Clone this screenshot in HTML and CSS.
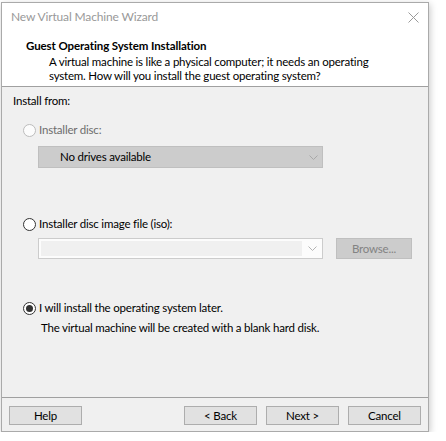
FILE: index.html
```html
<!DOCTYPE html>
<html>
<head>
<meta charset="utf-8">
<link rel="stylesheet" href="styles.css">
</head>
<body>
<div class="window">
  <div class="titlebar">
    <span class="title">New Virtual Machine Wizard</span>
    <svg class="close" width="11" height="11" viewBox="0 0 11 11"><path d="M0.5 0.5 L10.5 10.5 M10.5 0.5 L0.5 10.5" stroke="#9a9a9a" stroke-width="1" fill="none"/></svg>
  </div>
  <div class="header">
    <div class="heading">Guest Operating System Installation</div>
    <div class="desc">
      <span class="line">A virtual machine is like a physical computer; it needs an operating</span>
      <span class="line">system. How will you install the guest operating system?</span>
    </div>
  </div>
  <div class="content">
    <div class="group-label">Install from:</div>

    <div class="radio-row row-disc disabled">
      <span class="radio"></span>
      <span class="radio-label">Installer disc:</span>
    </div>
    <div class="combo combo-disabled">
      <span class="combo-text">No drives available</span>
      <svg class="chev" width="9" height="5" viewBox="0 0 9 5"><polyline points="0.5,0.5 4.5,4.5 8.5,0.5" stroke="#a8a8a8" fill="none"/></svg>
    </div>

    <div class="radio-row row-iso">
      <span class="radio"></span>
      <span class="radio-label">Installer disc image file (iso):</span>
    </div>
    <div class="iso-line">
      <div class="combo combo-edit">
        <span class="field"></span>
        <svg class="chev" width="9" height="5" viewBox="0 0 9 5"><polyline points="0.5,0.5 4.5,4.5 8.5,0.5" stroke="#b4b4b4" fill="none"/></svg>
      </div>
      <div class="btn btn-disabled browse">Browse...</div>
    </div>

    <div class="radio-row row-later">
      <span class="radio checked"></span>
      <span class="radio-label">I will install the operating system later.</span>
    </div>
    <div class="note">The virtual machine will be created with a blank hard disk.</div>
  </div>
  <div class="footer">
    <div class="btn help">Help</div>
    <div class="btn">&lt; Back</div>
    <div class="btn">Next &gt;</div>
    <div class="btn">Cancel</div>
  </div>
</div>
</body>
</html>
```

FILE: styles.css
```css
html, body {
  margin: 0;
  padding: 0;
  background: #ffffff;
}

body {
  font-family: Lato, "Liberation Sans", sans-serif;
  font-size: 11.5px;
  letter-spacing: -0.2px;
  line-height: 14px;
  color: #000000;
}

.window {
  box-sizing: border-box;
  margin: 2px 0 0 1px;
  width: 428px;
  height: 430px;
  border: 1px solid #aaaaaa;
  background: #f0f0f0;
  box-shadow: 1px 2px 7px rgba(0, 0, 0, 0.22);
  display: flex;
  flex-direction: column;
}

.titlebar {
  height: 30px;
  box-sizing: border-box;
  padding: 6px 9px 0 9px;
  background: #ffffff;
  display: flex;
  align-items: flex-start;
}

.title {
  color: #999999;
  line-height: 16px;
  font-size: 12px;
  letter-spacing: -0.15px;
}

.close {
  margin-left: auto;
  margin-top: 3px;
  display: block;
}

.header {
  background: #ffffff;
  padding: 6px 0 3px 24px;
  border-bottom: 1px solid #a0a0a0;
}

.heading {
  font-weight: bold;
  line-height: 14px;
  letter-spacing: -0.1px;
}

.desc {
  margin-top: 2px;
  padding-left: 23px;
}

.line {
  display: block;
  white-space: nowrap;
}

.content {
  flex: 1;
  padding: 7px 11px 0 11px;
  display: flex;
  flex-direction: column;
  align-items: flex-start;
}

.radio-row {
  display: flex;
  align-items: center;
  height: 14px;
  margin-left: 10px;
}

.row-disc { margin-top: 15px; }
.row-iso { margin-top: 49px; }
.row-later { margin-top: 42px; }

.radio {
  box-sizing: border-box;
  width: 13px;
  height: 13px;
  border: 1px solid #333333;
  border-radius: 50%;
  background: #ffffff;
  display: flex;
  align-items: center;
  justify-content: center;
  flex: none;
}

.radio.checked::after {
  content: "";
  width: 7px;
  height: 7px;
  border-radius: 50%;
  background: #333333;
}

.radio-label {
  margin-left: 3px;
  white-space: nowrap;
}

.disabled .radio {
  border-color: #bcbcbc;
  background: #fcfcfc;
}

.disabled .radio-label {
  color: #6d6d6d;
}

.combo {
  box-sizing: border-box;
  width: 285px;
  display: flex;
  align-items: center;
  margin-left: 25px;
}

.combo-disabled {
  margin-top: 9px;
  height: 22px;
  background: #cccccc;
  border: 1px solid #bfbfbf;
  padding-left: 21px;
}

.combo-text {
  white-space: nowrap;
}

.combo-disabled .chev {
  margin-left: auto;
  margin-right: 4px;
}

.iso-line {
  display: flex;
  align-items: flex-start;
  margin-top: 7px;
}

.combo-edit {
  height: 21px;
  background: #fcfcfc;
  border: 1px solid #cccccc;
  padding: 2px;
}

.field {
  width: 261px;
  height: 15px;
  background: #f0f0f0;
}

.combo-edit .chev {
  margin-left: 6px;
}

.chev {
  display: block;
  flex: none;
}

.btn {
  box-sizing: border-box;
  width: 73px;
  height: 19px;
  border: 1px solid #adadad;
  background: #e1e1e1;
  text-align: center;
  line-height: 17px;
  white-space: nowrap;
}

.btn-disabled {
  background: #cccccc;
  border-color: #bfbfbf;
  color: #838383;
}

.browse {
  width: 76px;
  height: 21px;
  line-height: 19px;
  margin-left: 13px;
}

.note {
  margin-top: 6px;
  padding-left: 28px;
  white-space: nowrap;
}

.footer {
  border-top: 1px solid #a0a0a0;
  padding: 8px 7px 6px 7px;
  display: flex;
  gap: 9px;
}

.help {
  margin-right: auto;
}
```
